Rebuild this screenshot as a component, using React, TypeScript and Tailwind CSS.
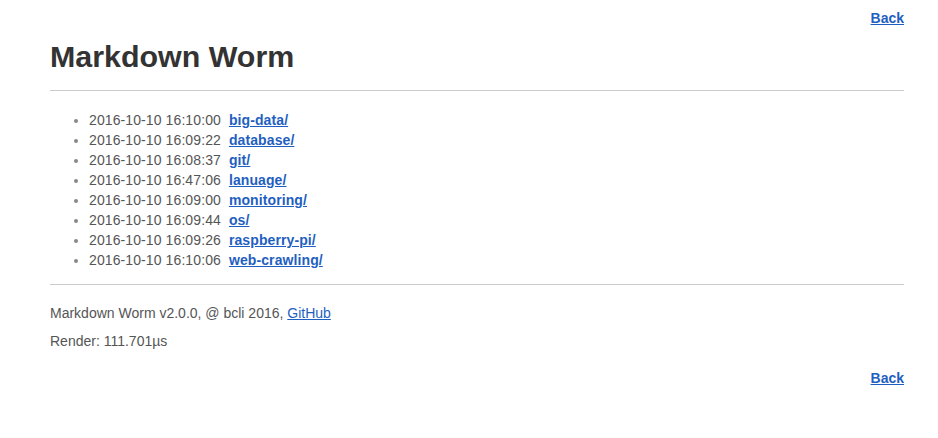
import React from 'react';

const entries = [
  { time: '2016-10-10 16:10:00', name: 'big-data/' },
  { time: '2016-10-10 16:09:22', name: 'database/' },
  { time: '2016-10-10 16:08:37', name: 'git/' },
  { time: '2016-10-10 16:47:06', name: 'lanuage/' },
  { time: '2016-10-10 16:09:00', name: 'monitoring/' },
  { time: '2016-10-10 16:09:44', name: 'os/' },
  { time: '2016-10-10 16:09:26', name: 'raspberry-pi/' },
  { time: '2016-10-10 16:10:06', name: 'web-crawling/' },
];

const App = () => {
  return (
    <div className="min-h-screen bg-white pl-[50px] pr-[34px] pt-[8px] text-[14px] text-[#555] [font-family:'Liberation_Sans',Arial,sans-serif]">
      <div className="text-right leading-5">
        <a href="#" className="font-bold text-[#1f5fbf] underline">Back</a>
      </div>

      <h1 className="mt-[10px] text-[30.4px] font-bold leading-[36px] text-[#333]">Markdown Worm</h1>

      <hr className="mt-[16px] border-t border-[#ccc]" />

      <ul className="mt-[19px] list-disc pl-[39px] leading-5 tracking-[0.1px] marker:text-[#888]">
        {entries.map(e => (
          <li key={e.name}>
            <span>{e.time}</span>
            <a href="#" className="ml-[8px] font-bold text-[#1f5fbf] underline">{e.name}</a>
          </li>
        ))}
      </ul>

      <hr className="mt-[14px] border-t border-[#ccc]" />

      <p className="mt-[18px] leading-5">
        Markdown Worm v2.0.0, @ bcli 2016, <a href="#" className="text-[#1f5fbf] underline">GitHub</a>
      </p>
      <p className="mt-[8px] leading-5">Render: 111.701µs</p>

      <div className="mt-[17px] text-right leading-5">
        <a href="#" className="font-bold text-[#1f5fbf] underline">Back</a>
      </div>
    </div>
  );
};

export default App;
